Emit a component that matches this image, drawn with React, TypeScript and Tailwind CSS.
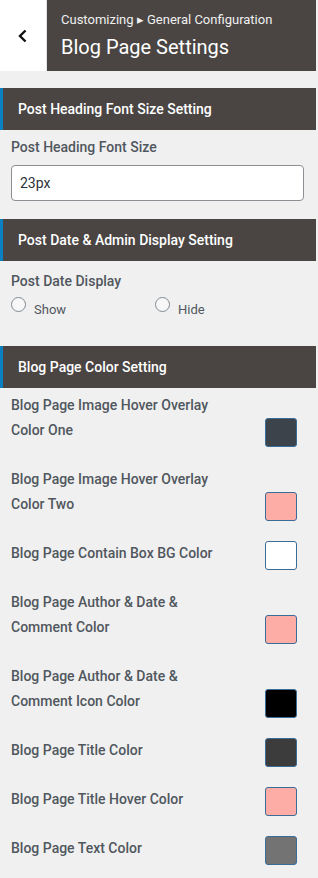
import React from 'react';

const colorRows: { label: string; color: string }[] = [
  { label: 'Blog Page Image Hover Overlay Color One', color: '#3d434b' },
  { label: 'Blog Page Image Hover Overlay Color Two', color: '#fdaca6' },
  { label: 'Blog Page Contain Box BG Color', color: '#ffffff' },
  { label: 'Blog Page Author & Date & Comment Color', color: '#fdaca6' },
  { label: 'Blog Page Author & Date & Comment Icon Color', color: '#000000' },
  { label: 'Blog Page Title Color', color: '#3c3c3c' },
  { label: 'Blog Page Title Hover Color', color: '#fdaca6' },
  { label: 'Blog Page Text Color', color: '#737373' },
];

const SectionHeader: React.FC<{ title: string }> = ({ title }) => (
  <div className="h-[42px] bg-[#4a4543] border-l-[3px] border-[#0a7fc2] pl-[15px] flex items-center text-white text-[14px] font-medium">
    {title}
  </div>
);

const Radio: React.FC<{ label: string }> = ({ label }) => (
  <label className="flex items-start">
    <span className="mt-[5px] w-[15px] h-[15px] rounded-full border border-[#7e8993] bg-[#f7f7f7]" />
    <span className="ml-[8px] mt-[10px] text-[13px] leading-[16px] text-[#50575e]">{label}</span>
  </label>
);

const App: React.FC = () => {
  return (
    <div className="w-[318px] h-[878px] bg-[#f0f0f0] overflow-hidden" style={{ fontFamily: 'Roboto, "Liberation Sans", sans-serif' }}>
      <div className="w-[316px]">
        <header className="flex h-[71px]">
          <button className="w-[47px] bg-white flex items-center justify-center border-r border-[#e4e4e4]">
            <svg width="12" height="14" viewBox="0 0 12 14" fill="none">
              <path d="M8.5 1.5 L3 7 L8.5 12.5" stroke="#111" strokeWidth="2.4" />
            </svg>
          </button>
          <div className="flex-1 bg-[#4a4543] pl-[14px] pt-[12px]">
            <div className="text-[13px] leading-[16px] text-[#f0f0f0]">Customizing ▸ General Configuration</div>
            <div className="mt-[6px] text-[20px] leading-[26px] text-white">Blog Page Settings</div>
          </div>
        </header>

        <div className="mt-[17px]">
          <SectionHeader title="Post Heading Font Size Setting" />
          <div className="px-[11px] pt-[5px] pb-[18px]">
            <div className="text-[14px] leading-[25px] font-medium text-[#50575e]">Post Heading Font Size</div>
            <input
              readOnly
              value="23px"
              className="mt-[5px] w-[293px] h-[36px] bg-white border border-[#8c8f94] rounded-[4px] px-[8px] text-[14px] text-[#2c3338] outline-none"
            />
          </div>

          <SectionHeader title="Post Date & Admin Display Setting" />
          <div className="px-[11px] pt-[8px] h-[85px]">
            <div className="text-[14px] leading-[25px] font-medium text-[#50575e]">Post Date Display</div>
            <div className="flex -mt-[2px]">
              <div className="w-[144px]">
                <Radio label="Show" />
              </div>
              <Radio label="Hide" />
            </div>
          </div>

          <SectionHeader title="Blog Page Color Setting" />
          <div className="px-[11px] pt-[5px] flex flex-col gap-[20px]">
            {colorRows.map((row) => (
              <div key={row.label} className="flex items-end justify-between">
                <div className="w-[228px] pb-[4px] text-[14px] leading-[25px] font-medium text-[#50575e]">{row.label}</div>
                <div
                  className="mr-[8px] w-[32px] h-[29px] rounded-[3px] border border-[#3a6c98]"
                  style={{ backgroundColor: row.color }}
                />
              </div>
            ))}
          </div>
        </div>
      </div>
    </div>
  );
};

export default App;
